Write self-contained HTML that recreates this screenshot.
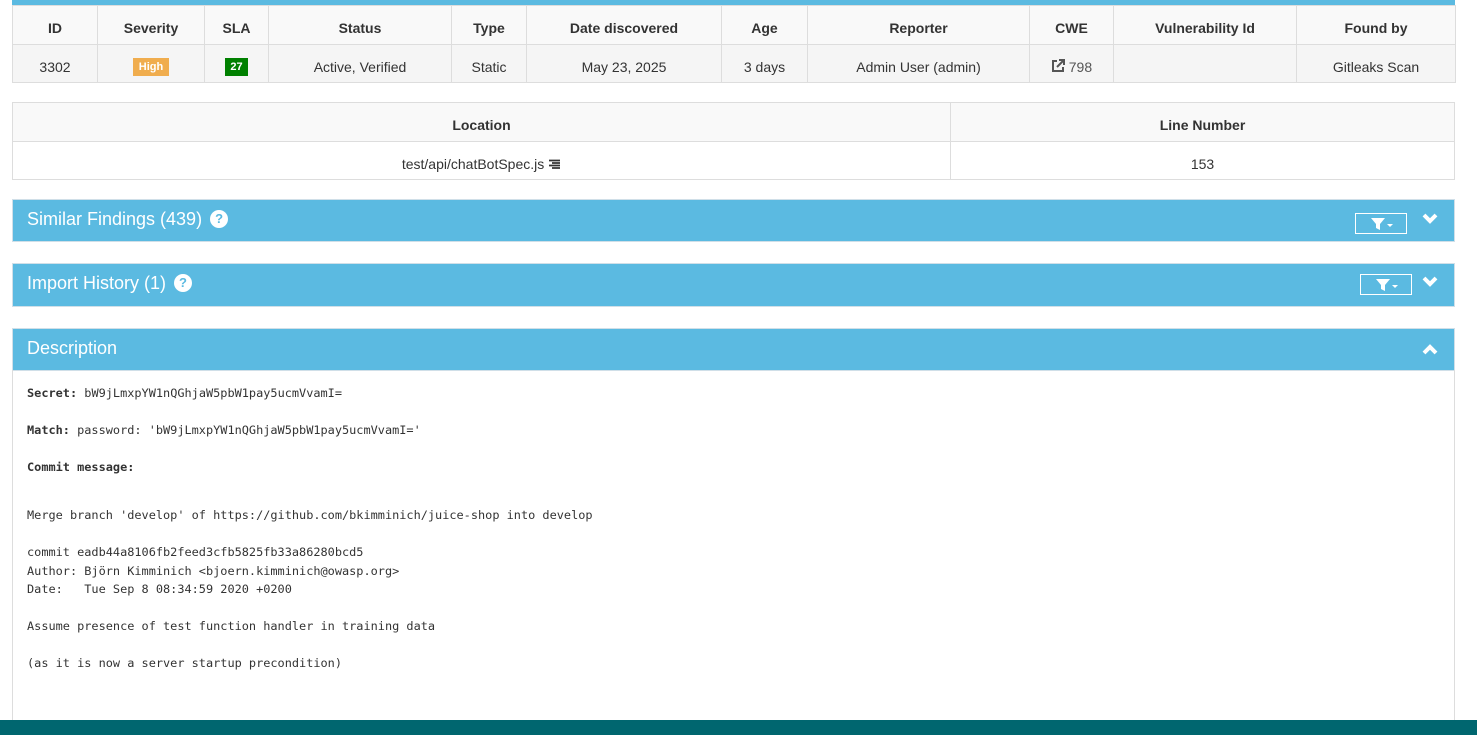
<!DOCTYPE html>
<html><head><meta charset="utf-8"><style>
*{box-sizing:border-box;margin:0;padding:0}
body{width:1477px;height:735px;overflow:hidden;background:#fff;font-family:"Liberation Sans",Arial,sans-serif;color:#333;font-size:14px;position:relative}
.abs{position:absolute}
table{border-collapse:collapse;position:absolute;left:12px;width:1443px;table-layout:fixed}
td,th{border:1px solid #ddd;text-align:center;vertical-align:middle;font-size:14px;padding-top:6px}
th{font-weight:bold;background:#f9f9f9}
.panel{position:absolute;left:12px;width:1443px;background:#5bbae1;border:1px solid #d0dfe8;color:#fff;font-size:18px}
.panel .t{position:absolute;left:14px;top:9px}
.q{display:inline-block;width:18px;height:18px;border-radius:50%;background:#fff;color:#5bbae1;font-size:13px;font-weight:bold;text-align:center;line-height:18px;vertical-align:2px;margin-left:3px}
.fb{position:absolute;width:52px;height:21px;border:1px solid #fff}
.mono{font-family:"DejaVu Sans Mono","Liberation Mono",monospace;font-size:11.9px;color:#333;position:absolute;left:27px;white-space:pre}
</style></head><body>
<div class="abs" style="left:12px;top:0;width:1443px;height:5px;background:#5bbae1"></div>
<table style="top:5px">
<colgroup><col style="width:85px"><col style="width:107px"><col style="width:64px"><col style="width:183px"><col style="width:75px"><col style="width:195px"><col style="width:86px"><col style="width:222px"><col style="width:84px"><col style="width:183px"><col style="width:159px"></colgroup>
<tr style="height:39px"><th>ID</th><th>Severity</th><th>SLA</th><th>Status</th><th>Type</th><th>Date discovered</th><th>Age</th><th>Reporter</th><th>CWE</th><th>Vulnerability Id</th><th>Found by</th></tr>
<tr style="height:38px;background:#f5f5f5"><td>3302</td><td><span style="display:inline-block;background:#f0ad4e;color:#fff;font-weight:bold;font-size:11px;padding:2px 6px;line-height:14px">High</span></td><td><span style="display:inline-block;background:#008000;color:#fff;font-weight:bold;font-size:11px;padding:2px 5px;line-height:14px">27</span></td><td>Active, Verified</td><td>Static</td><td>May 23, 2025</td><td>3 days</td><td>Admin User (admin)</td><td style="color:#337ab7"><svg width="14" height="14" viewBox="0 0 14 14" style="vertical-align:-1px"><path d="M6 2H2v10h10V8" fill="none" stroke="#555" stroke-width="2"/><path d="M8 1h5v5M13 1L6 8" fill="none" stroke="#555" stroke-width="2"/></svg> <span style="color:#555">798</span></td><td></td><td>Gitleaks Scan</td></tr>
</table>
<table style="top:102px">
<colgroup><col style="width:938px"><col></colgroup>
<tr style="height:39px"><th>Location</th><th>Line Number</th></tr>
<tr style="height:38px;background:#fff"><td>test/api/chatBotSpec.js <svg width="13" height="11" viewBox="0 0 13 11" style="vertical-align:-1px"><path d="M1 1.5h11M4 4h8M1 6.5h11M4 9h8" stroke="#333" stroke-width="1.8"/></svg></td><td>153</td></tr>
</table>
<div class="panel" style="top:199px;height:43px"><div class="t">Similar Findings (439) <span class="q">?</span></div>
<div class="fb" style="left:1342px;top:13px"><svg width="52" height="21"><path d="M15 4h14l-5 6v6l-4-2v-4z" fill="#fff"/><path d="M31 10h6l-3 3z" fill="#fff"/></svg></div>
<svg class="abs" style="left:1408px;top:12px" width="18" height="14"><path d="M3 3l6 6 6-6" fill="none" stroke="#fff" stroke-width="4"/></svg></div>
<div class="panel" style="top:263px;height:44px"><div class="t">Import History (1) <span class="q">?</span></div>
<div class="fb" style="left:1347px;top:10px"><svg width="52" height="21"><path d="M15 4h14l-5 6v6l-4-2v-4z" fill="#fff"/><path d="M31 10h6l-3 3z" fill="#fff"/></svg></div>
<svg class="abs" style="left:1408px;top:11px" width="18" height="14"><path d="M3 3l6 6 6-6" fill="none" stroke="#fff" stroke-width="4"/></svg></div>
<div class="panel" style="top:328px;height:43px"><div class="t">Description</div>
<svg class="abs" style="left:1408px;top:14px" width="18" height="14"><path d="M3 10l6-6 6 6" fill="none" stroke="#fff" stroke-width="4"/></svg></div>
<div class="abs" style="left:12px;top:370px;width:1443px;height:360px;border:1px solid #ddd;border-top:none"></div>
<div class="mono" style="top:386px"><b>Secret:</b> bW9jLmxpYW1nQGhjaW5pbW1pay5ucmVvamI=</div>
<div class="mono" style="top:423px"><b>Match:</b> password: 'bW9jLmxpYW1nQGhjaW5pbW1pay5ucmVvamI='</div>
<div class="mono" style="top:460px"><b>Commit message:</b></div>
<div class="mono" style="top:506px;line-height:18.5px">Merge branch 'develop' of https://github.com/bkimminich/juice-shop into develop

commit eadb44a8106fb2feed3cfb5825fb33a86280bcd5
Author: Björn Kimminich &lt;bjoern.kimminich@owasp.org&gt;
Date:   Tue Sep 8 08:34:59 2020 +0200

Assume presence of test function handler in training data

(as it is now a server startup precondition)</div>
<div class="abs" style="left:0;top:720px;width:1477px;height:15px;background:#00666f"></div>
</body></html>
